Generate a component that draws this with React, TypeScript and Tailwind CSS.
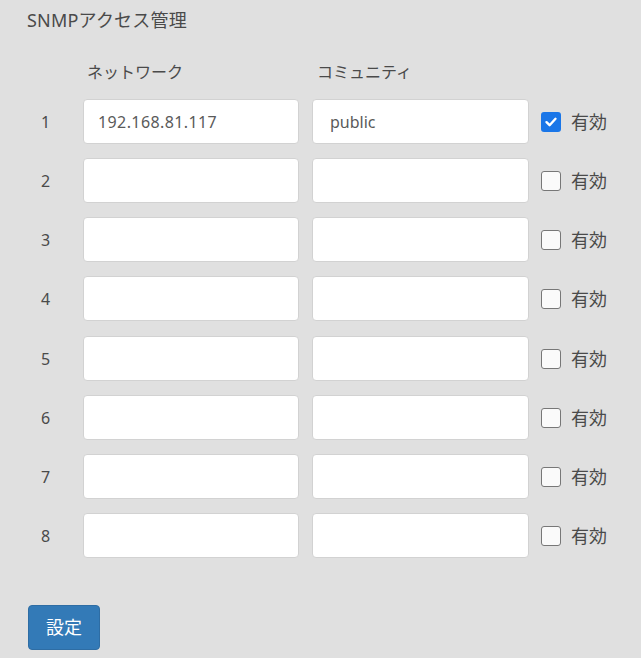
import React from "react";

const rows = [
  { n: 1, net: "192.168.81.117", com: "public", on: true },
  { n: 2, net: "", com: "", on: false },
  { n: 3, net: "", com: "", on: false },
  { n: 4, net: "", com: "", on: false },
  { n: 5, net: "", com: "", on: false },
  { n: 6, net: "", com: "", on: false },
  { n: 7, net: "", com: "", on: false },
  { n: 8, net: "", com: "", on: false },
];

const font = {
  fontFamily: '"Noto Sans", "Noto Sans CJK JP", sans-serif',
};

function Check({ on }: { on: boolean }) {
  if (on) {
    return (
      <div className="w-[20px] h-[20px] rounded-[3px] bg-[#1a76e8] flex items-center justify-center">
        <svg width="14" height="14" viewBox="0 0 14 14">
          <path d="M2.5 7.2 L5.6 10.2 L11.5 3.8" stroke="white" strokeWidth="2.4" fill="none" strokeLinecap="round" strokeLinejoin="round" />
        </svg>
      </div>
    );
  }
  return <div className="w-[20px] h-[20px] rounded-[3px] border-[1.5px] border-[#777] bg-[#fafafa]" />;
}

export default function App() {
  return (
    <div className="min-h-[658px] w-[641px] bg-[#e0e0e0] pl-[27px] pt-[8px] text-[#4a4a4a]" style={font}>
      <div className="text-[18px] leading-[24px] text-[#4a4a4a] tracking-[0.2px]">SNMPアクセス管理</div>
      <div className="flex mt-[28px] h-[24px] items-center text-[16px] text-[#4a4a4a]">
        <div className="w-[56px]" />
        <div className="w-[229px] pl-[4px]">ネットワーク</div>
        <div className="pl-[5px]">コミュニティ</div>
      </div>
      <div className="flex flex-col gap-[14px] mt-[15px]">
        {rows.map((r) => (
          <div key={r.n} className={`flex items-center h-[45px] ${r.n === 5 ? "mt-[1px]" : ""}`}>
            <div className="w-[56px] pl-[14px] text-[16px] text-[#4a4a4a]">{r.n}</div>
            <div className="w-[216px] h-[45px] bg-white rounded-[4px] border border-[#d2d2d2] flex items-center pl-[14px] text-[16px] text-[#5a5a5a] tracking-[0.4px]">
              {r.net}
            </div>
            <div className="w-[217px] h-[45px] ml-[13px] bg-white rounded-[4px] border border-[#d2d2d2] flex items-center pl-[17px] text-[16px] text-[#5a5a5a]">
              {r.com}
            </div>
            <div className="ml-[12px]">
              <Check on={r.on} />
            </div>
            <div className="ml-[10px] text-[18px] text-[#4a4a4a] leading-none">有効</div>
          </div>
        ))}
      </div>
      <div className="mt-[47px] ml-[1px] w-[72px] h-[45px] rounded-[4px] bg-[#337ab7] border border-[#2e6da4] flex items-center justify-center text-white text-[18px]">
        設定
      </div>
    </div>
  );
}
